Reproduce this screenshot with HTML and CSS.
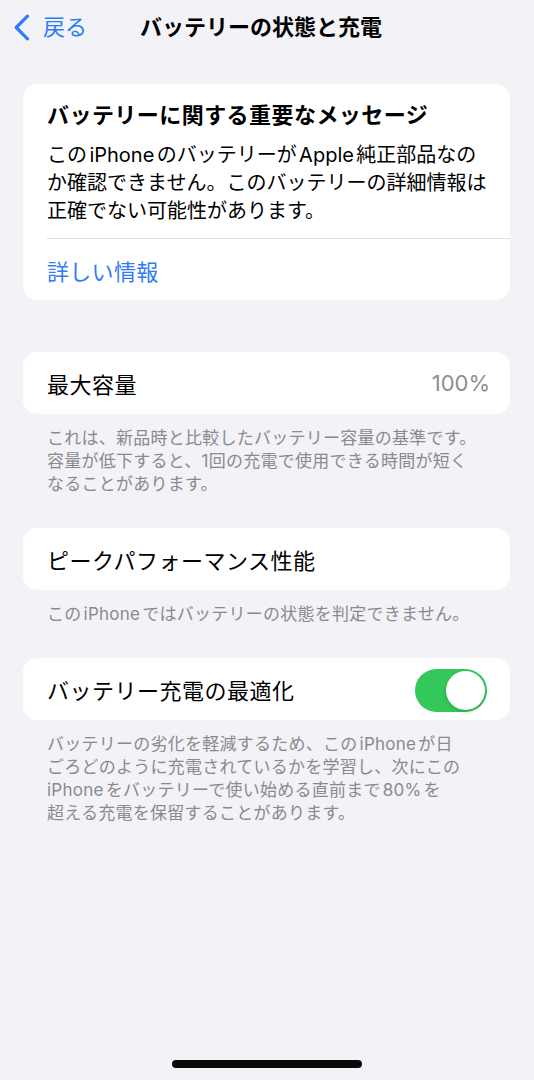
FILE: index.html
```html
<!DOCTYPE html>
<html lang="ja">
<head>
<meta charset="utf-8">
<title>バッテリーの状態と充電</title>
<link rel="stylesheet" href="styles.css">
</head>
<body>
<div class="screen">
  <header class="nav">
    <div class="back">
      <svg class="chev" width="17" height="27" viewBox="0 0 17 27"><path d="M14.5 2.2 L3.2 13.5 L14.5 24.8" fill="none" stroke="currentColor" stroke-width="3.2" stroke-linecap="round" stroke-linejoin="round"/></svg>
      <span>戻る</span>
    </div>
    <div class="nav-title">バッテリーの状態と充電</div>
    <div></div>
  </header>

  <main class="content">
    <section class="card notice">
      <h2 class="notice-title">バッテリーに関する重要なメッセージ</h2>
      <p class="notice-body">この<span class="lat">iPhone</span>のバッテリーが<span class="lat">Apple</span>純正部品なの<br>か確認できません。このバッテリーの詳細情報は<br>正確でない可能性があります。</p>
      <div class="divider"></div>
      <div class="link">詳しい情報</div>
    </section>

    <section class="group">
      <div class="card row">
        <span class="label">最大容量</span>
        <span class="value">100%</span>
      </div>
      <p class="footer">これは、新品時と比較したバッテリー容量の基準です。<br>容量が低下すると、1回の充電で使用できる時間が短く<br>なることがあります。</p>
    </section>

    <section class="group">
      <div class="card row">
        <span class="label">ピークパフォーマンス性能</span>
      </div>
      <p class="footer">この<span class="lat">iPhone</span>ではバッテリーの状態を判定できません。</p>
    </section>

    <section class="group">
      <div class="card row">
        <span class="label">バッテリー充電の最適化</span>
        <span class="toggle"><span class="knob"></span></span>
      </div>
      <p class="footer">バッテリーの劣化を軽減するため、この<span class="lat">iPhone</span>が日<br>ごろどのように充電されているかを学習し、次にこの<br><span class="lat lat-start">iPhone</span>をバッテリーで使い始める直前まで<span class="lat">80%</span>を<br>超える充電を保留することがあります。</p>
    </section>
  </main>

  <div class="home-indicator"></div>
</div>
</body>
</html>
```

FILE: styles.css
```css
html, body {
  margin: 0;
  padding: 0;
}

body {
  background: #f2f2f7;
  font-family: Inter, "Noto Sans CJK JP", "Noto Sans", sans-serif;
  color: #000;
}

.screen {
  min-height: 1080px;
  display: flex;
  flex-direction: column;
  box-sizing: border-box;
}

.nav {
  height: 54px;
  display: grid;
  grid-template-columns: 1fr auto 1fr;
  align-items: center;
  padding-right: 12px;
}

.back {
  display: flex;
  align-items: center;
  gap: 13px;
  padding-left: 13px;
  color: #2f7cf6;
  font-size: 22px;
  line-height: 28px;
}

.chev {
  display: block;
}

.nav-title {
  font-size: 22px;
  font-weight: 700;
  line-height: 28px;
}

.content {
  display: flex;
  flex-direction: column;
  padding: 30px 24px 0 23px;
}

.card {
  background: #fff;
  border-radius: 14px;
}

.notice {
  padding: 16px 12px 0 24px;
  margin-bottom: 52px;
}

.notice-title {
  margin: 0;
  font-size: 22px;
  font-weight: 700;
  line-height: 30px;
  letter-spacing: 0.45px;
}

.notice-body {
  margin: 11px 0 0;
  font-size: 20px;
  line-height: 28px;
}

.lat {
  margin: 0 0.12em;
}

.lat-start {
  margin-left: 0;
}

.divider {
  height: 1px;
  background: #dcdce0;
  margin: 13px -12px 0 0;
}

.link {
  height: 61px;
  display: flex;
  align-items: center;
  color: #2f7cf6;
  font-size: 22px;
  letter-spacing: 0.3px;
}

.group + .group {
  margin-top: 32px;
}

.row {
  height: 62px;
  display: flex;
  align-items: center;
  justify-content: space-between;
  padding: 0 23px 0 24px;
}

.label {
  font-size: 22px;
  letter-spacing: 0.5px;
}

.value {
  font-size: 22px;
  color: #8e8e93;
  margin-right: -3px;
}

.footer {
  margin: 13px 0 0;
  padding: 0 0 0 24px;
  font-size: 17px;
  line-height: 23px;
  color: #8a8a8e;
  letter-spacing: 0.25px;
}

.toggle {
  width: 72px;
  height: 43px;
  border-radius: 22px;
  background: #34c759;
  display: flex;
  justify-content: flex-end;
  align-items: center;
  padding: 0 2px;
  box-sizing: border-box;
  margin-top: 3px;
}

.knob {
  width: 39px;
  height: 39px;
  border-radius: 50%;
  background: #fff;
  box-shadow: 0 2px 4px rgba(0, 0, 0, 0.15);
}

.home-indicator {
  margin-top: auto;
  margin-bottom: 12px;
  align-self: center;
  width: 190px;
  height: 8px;
  border-radius: 4px;
  background: #0a0a0a;
}
```
